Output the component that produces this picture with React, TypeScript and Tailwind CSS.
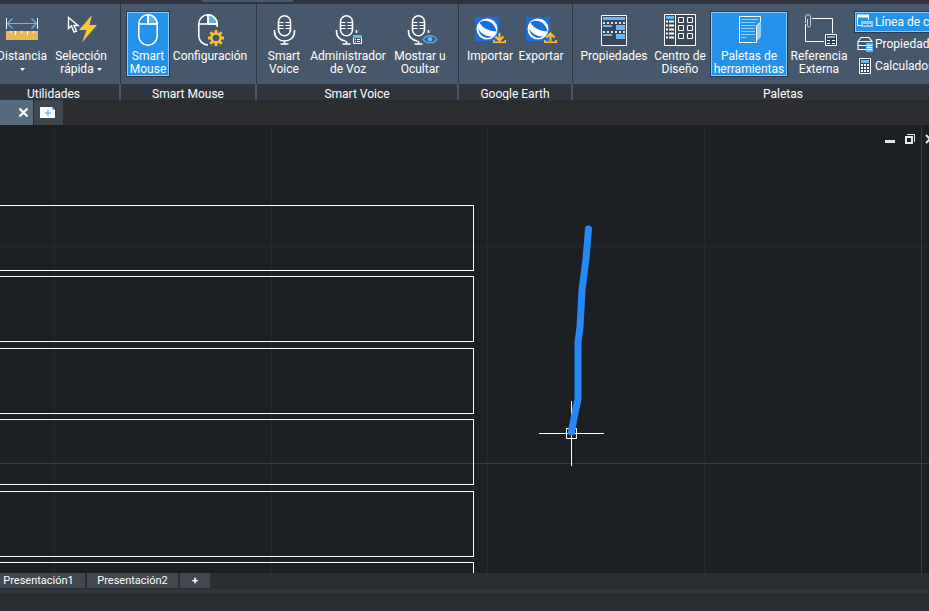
import React from 'react';

const Mouse = ({ x = 6, cut = false }: { x?: number; cut?: boolean }) => (
  <g fill="none" stroke="#fff" strokeWidth="1.6">
    <path d={`M${x + 10} .8a9.2 9.2 0 0 1 9.2 9.2h-9.2z`} fill="#5bb2f5" />
    {cut ? (
      <path d={`M${x + 10} 31A9.2 9.2 0 0 1 ${x + 0.8} 22V10A9.2 9.2 0 0 1 ${x + 19.2} 10V13`} />
    ) : (
      <rect x={x + 0.8} y=".8" width="18.4" height="30.4" rx="9.2" />
    )}
    <path d={`M${x + 1} 10h18M${x + 10} 1v9`} />
  </g>
);

const Mic = ({ x = 0, cut = false }: { x?: number; cut?: boolean }) => (
  <g fill="none" stroke="#fff" strokeWidth="1.6" transform={`translate(${x} 0)`}>
    <rect x="10.5" y="1.8" width="12" height="20" rx="6" />
    <path d="M10.5 8.5h5M10.5 11.5h5M10.5 14.5h5M17.5 8.5h5M17.5 11.5h5M17.5 14.5h5" strokeWidth="1" />
    <path d={cut ? 'M6.5 16v2c0 5 4 8.500 9 9M26.5 16v3' : 'M6.5 16v1.5c0 6 4.5 9.500 10 9.500s10-3.5 10-9.500V16'} />
    <path d="M16.5 27v2.5M12.5 30h8" />
  </g>
);

const Earth = ({ up = false }: { up?: boolean }) => (
  <g>
    <path d="M1 3h24v24H1z" fill="#1a6fdc" />
    <circle cx="13" cy="15" r="10.5" fill="#fff" />
    <path d="M5.500 8.500C11 4 21 8 22.500 17.500 17 17.500 8 14.500 5.500 8.500z" fill="#1a6fdc" />
    <path d="M4 14.500c2.500 5 8 8 14 8-4.500 2.800-12 1.500-14-8z" fill="#1a6fdc" />
    <g fill="none" stroke="#fcc02f" strokeWidth="1.6">
      <path d="M19.800 26v2.200h11.400V26" />
      <path d={up ? 'M25.5 27v-7M21.5 23.5l4-4 4 4' : 'M25.5 19v7M21.5 22.5l4 4 4-4'} strokeWidth="2" />
    </g>
  </g>
);

const icons: Record<string, React.ReactNode> = {
  distance: (
    <g fill="none">
      <path d="M2 9.500h28M6.500 4.500l-5 5 5 5M25.500 4.500l5 5-5 5" stroke="#62b8fb" strokeWidth="1.2" />
      <path d="M.5 4v11M31.5 4v11" stroke="#fff" />
      <path d="M0 17h32v9H0z" fill="#e9b858" />
      <path d="M4.5 17v2M9.5 17v4M15.5 17v2M21.5 17v4M27.5 17v2" stroke="#fff" />
    </g>
  ),
  select: (
    <g>
      <path d="M3.5 3.5v11l3-2.5 2.5 6 2.5-1-2.5-5.5h4z" fill="none" stroke="#fff" strokeWidth="1.4" />
      <path d="M27 1L14 16h7.500L17 28.500 32 11h-7.500L27 1z" fill="#fcc737" />
    </g>
  ),
  mouse: <Mouse />,
  config: (
    <g>
      <Mouse x={4} cut />
      <g fill="none" stroke="#fcc02f">
        <circle cx="22" cy="24" r="4.5" strokeWidth="2.4" />
        <path d="M22 16v3M22 29v3M14 24h3M27 24h3M16.300 18.300l2 2M25.700 27.700l2 2M27.700 18.300l-2 2M18.300 27.700l-2 2" strokeWidth="2.8" />
      </g>
    </g>
  ),
  mic: <Mic />,
  micAdmin: (
    <g>
      <Mic x={-2} cut />
      <path d="M21 21h10v10H21z" fill="#47586c" />
      <path d="M21.5 22.5h8v7h-8z" fill="none" stroke="#fff" />
      <path d="M21 21h9v3h-9z" fill="#62b8fb" />
      <path d="M23 25.5h1M25 25.5h3M23 27.5h1M25 27.5h3" stroke="#fff" />
    </g>
  ),
  micEye: (
    <g>
      <Mic x={-2} cut />
      <path d="M19 25.5c3.500-5 10.500-5 14 0-3.500 4.500-10.500 4.500-14 0z" fill="#47586c" stroke="#4fa9ee" strokeWidth="1.3" />
      <circle cx="26" cy="25.200" r="2.300" fill="#62b8fb" />
    </g>
  ),
  earthIn: <Earth />,
  earthOut: <Earth up />,
  props: (
    <g>
      <path d="M3.500 1.500h25v30h-25z" fill="#3b4755" stroke="#fff" />
      <path d="M5 3h22v3H5zM5 11h9v2H5zM18 11h9v5h-9zM5 20h9v2H5zM18 20h9v5h-9z" fill="#62b8fb" />
      <path d="M5 9h22M5 18h22" stroke="#dfe5ec" strokeWidth="2" strokeDasharray="2 2" />
    </g>
  ),
  center: (
    <g fill="none" stroke="#fff">
      <path d="M.5.5h31v31H.5zM11.500 1v30" fill="#3b4755" />
      <path d="M2 3.500h8" stroke="#62b8fb" strokeWidth="3" />
      <path d="M2 7.500h2M5 7.500h5M2 11.500h2M5 11.500h5M2 15.500h2M5 15.500h5M2 19.500h2M5 19.500h5M2 23.500h2M5 23.500h5" strokeWidth="2" />
      <path d="M14.500 3.500h5v5h-5zM23.500 3.500h5v5h-5zM14.500 11.500h5v5h-5zM23.500 11.500h5v5h-5zM14.500 19.500h5v5h-5zM23.500 19.500h5v5h-5z" />
    </g>
  ),
  palette: (
    <g fill="none">
      <path d="M23 12l5-4v15l-5 5z" fill="#8fd0ff" />
      <path d="M6.500 2.500h21v5.500l-4 4v16.500h-17z" stroke="#fff" />
      <path d="M8 5.500h17M8 8.500h14M8 11.500h14M8 14.500h14M8 17.500h14M8 20.500h14M8 23.500h5" stroke="#8fd0ff" />
    </g>
  ),
  xref: (
    <g fill="none" stroke="#fff">
      <path d="M2.500 10v17.500H21M9 4.500h20.500V19" />
      <path d="M2.500 9V3a2.500 2.500 0 0 1 5 0v8.500a1.500 1.500 0 0 1-3 0V5" stroke="#c8d3de" />
      <path d="M22.500 20.500h11v11h-11z" fill="#2f3f52" />
      <path d="M24 23h8" stroke="#62b8fb" strokeWidth="2" />
      <path d="M24 26.500h3M29 26.500h3M24 29.500h3M29 29.500h3" />
    </g>
  ),
};

const Icon = ({ name }: { name: string }) => (
  <svg width="32" height="32" viewBox="0 0 32 32" className="block shrink-0 overflow-visible" aria-hidden="true">
    {icons[name]}
  </svg>
);

interface ToolProps {
  icon: string;
  lines: string[];
  width: string;
  active?: boolean;
  menu?: boolean;
}

const Caret = () => (
  <svg width="5" height="3" viewBox="0 0 5 3" className="inline-block align-middle" aria-hidden="true">
    <path d="M0 0h5L2.500 3z" fill="#fff" />
  </svg>
);

const Tool: React.FC<ToolProps> = ({ icon, lines, width, active, menu }) => (
  <button
    className={`flex h-[66px] shrink-0 flex-col items-center border pt-0.5 ${width} ${
      active ? 'border-[#2b3848] bg-[#2491eb] inset-ring inset-ring-[#8accfb]' : 'border-transparent'
    }`}
  >
    <Icon name={icon} />
    <span className="mt-1 flex flex-col items-center">
      {lines.map((line, i) => (
        <span key={line} className="whitespace-nowrap">
          {line}
          {menu && lines.length > 1 && i === lines.length - 1 && <> <Caret /></>}
        </span>
      ))}
      {menu && lines.length === 1 && <span><Caret /></span>}
    </span>
  </button>
);

interface PanelProps {
  title: string;
  width: string;
  bodyClass?: string;
  titleClass?: string;
  children: React.ReactNode;
}

const Panel: React.FC<PanelProps> = ({ title, width, bodyClass = 'pl-[5px]', titleClass = '', children }) => (
  <section className={`flex shrink-0 flex-col ${width}`}>
    <div className={`flex h-20 border-r border-[#2f3640] bg-[#47586c] pt-[7px] ${bodyClass}`}>{children}</div>
    <h2 className={`h-4 overflow-hidden border-r-2 border-[#47586c] bg-[#2f353f] text-center leading-5 ${titleClass}`}>{title}</h2>
  </section>
);

const smallTools = [
  {
    label: 'Línea de comandos',
    active: true,
    icon: (
      <g fill="none" stroke="#fff">
        <path d="M.5 1.500v10h4M11.500 2v4" />
        <path d="M0 2h12" strokeWidth="3" />
        <path d="M4 7h12v6H4z" fill="#8fd0ff" stroke="none" />
        <path d="M6 10.500h4M11 10.500h3" stroke="#2577bd" />
      </g>
    ),
  },
  {
    label: 'Propiedades de capas',
    icon: (
      <g fill="none" stroke="#fff" strokeWidth="1.200">
        <path d="M1 5.500l3-4h8l3 4zM1 5.500v4h8M1 9.500v4h8" />
        <path d="M9 7h7v9H9z" fill="#62b8fb" stroke="none" />
        <path d="M10 9.500h5M10 11.500h5M10 13.500h5" strokeWidth="1" />
      </g>
    ),
  },
  {
    label: 'Calculadora',
    icon: (
      <g fill="none" stroke="#fff">
        <path d="M2.500.5h11v15h-11z" fill="#3b4755" />
        <path d="M4 3.500h8" stroke="#62b8fb" strokeWidth="3" />
        <path d="M4 7h8M4 10h8M4 13h8" strokeWidth="2" strokeDasharray="2 1" />
      </g>
    ),
  },
];

const Ribbon = () => (
  <header className="shrink-0 bg-[#2f353f]">
    <div className="h-1 pl-[202px]">
      <div className="h-0.5 w-[91px] bg-[#47586c]" />
    </div>
    <div className="flex">
      <Panel title="Utilidades" width="w-[121px]" bodyClass="gap-2" titleClass="pr-3">
        <Tool icon="distance" lines={['Distancia']} width="w-11" menu />
        <Tool icon="select" lines={['Selección', 'rápida']} width="w-[58px]" menu />
      </Panel>
      <Panel title="Smart Mouse" width="w-[136px]">
        <Tool icon="mouse" lines={['Smart', 'Mouse']} width="w-11" active />
        <Tool icon="config" lines={['Configuración']} width="w-20" />
      </Panel>
      <Panel title="Smart Voice" width="w-[202px]">
        <Tool icon="mic" lines={['Smart', 'Voice']} width="w-11" />
        <Tool icon="micAdmin" lines={['Administrador', 'de Voz']} width="w-[84px]" />
        <Tool icon="micEye" lines={['Mostrar u', 'Ocultar']} width="w-[60px]" />
      </Panel>
      <Panel title="Google Earth" width="w-[114px]">
        <Tool icon="earthIn" lines={['Importar']} width="w-[52px]" />
        <Tool icon="earthOut" lines={['Exportar']} width="w-[50px]" />
      </Panel>
      <Panel title="Paletas" width="w-[422px]">
        <Tool icon="props" lines={['Propiedades']} width="w-[72px]" />
        <Tool icon="center" lines={['Centro de', 'Diseño']} width="w-[60px]" />
        <Tool icon="palette" lines={['Paletas de', 'herramientas']} width="w-[78px]" active />
        <Tool icon="xref" lines={['Referencia', 'Externa']} width="w-[62px]" />
        <div className="ml-1 w-[136px]">
          {smallTools.map((tool) => (
            <button
              key={tool.label}
              className={`flex h-[22px] w-full items-center gap-0.5 border pl-0.5 whitespace-nowrap ${
                tool.active ? 'border-[#2b3848] bg-[#2491eb] inset-ring inset-ring-[#8accfb]' : 'border-transparent'
              }`}
            >
              <svg width="16" height="16" viewBox="0 0 16 16" className="shrink-0" aria-hidden="true">
                {tool.icon}
              </svg>
              {tool.label}
            </button>
          ))}
        </div>
      </Panel>
    </div>
  </header>
);

const FileTabs = () => (
  <nav className="flex h-[25px] shrink-0 gap-px bg-[#2b2d31]">
    <button aria-label="Cerrar" className="flex w-[33px] items-center justify-end bg-[#566a80] pr-1">
      <svg width="11" height="11" viewBox="0 0 11 11" aria-hidden="true">
        <path d="M1.500 1.500l8 8M9.500 1.500l-8 8" stroke="#fff" strokeWidth="2.200" />
      </svg>
    </button>
    <button aria-label="Nuevo dibujo" className="flex w-[29px] items-center justify-center bg-[#40464f] pr-0.5">
      <svg width="15" height="11" viewBox="0 0 15 11" aria-hidden="true">
        <path d="M0 0h12l3 3v8H0z" fill="#fff" />
        <path d="M12 0v3h3" fill="#62b8fb" />
        <path d="M5 6h6M8 3v6" stroke="#3d9cf0" />
      </svg>
    </button>
  </nav>
);

const rows = [80, 151, 223, 294, 366, 437];

const Canvas = () => (
  <main className="relative min-h-[300px] flex-1 overflow-hidden bg-[#1c1f24]">
    <svg className="absolute inset-0 h-full w-full" fill="none" aria-hidden="true">
      <path d="M54.500 0v2000M271.500 0v2000M487.500 0v2000M704.500 0v2000M0 121.500h4000" stroke="#25282d" />
      <path d="M0 338.500h4000M921.500 0v2000" stroke="#383b40" />
      {rows.map((y) => (
        <rect key={y} x="-9.500" y={y + 0.5} width="483" height="65" stroke="#fff" />
      ))}
      <path d="M539 308.500h65M571.500 276v65M566.500 303.500h10v10h-10z" stroke="#fff" />
      <path
        d="M588.500 104L586 134l-4 31-2 37-2 15v57l-4 19-2.500 14"
        stroke="#2488f5"
        strokeWidth="7"
        strokeLinecap="round"
        strokeLinejoin="round"
      />
    </svg>
    <div className="absolute top-2 left-[884px] flex gap-2">
      <button aria-label="Minimizar">
        <svg width="12" height="12" viewBox="0 0 12 12"><path d="M1 7h10v3H1z" fill="#e6e6e6" /></svg>
      </button>
      <button aria-label="Restaurar">
        <svg width="12" height="12" viewBox="0 0 12 12" fill="none" stroke="#e6e6e6">
          <path d="M3 1.500h7.500V9" />
          <path d="M2 4h6v6H2z" strokeWidth="2" />
        </svg>
      </button>
      <button aria-label="Cerrar ventana">
        <svg width="12" height="12" viewBox="0 0 12 12"><path d="M2 2l8 8M10 2l-8 8" stroke="#e6e6e6" strokeWidth="2" /></svg>
      </button>
    </div>
  </main>
);

const LayoutTabs = () => (
  <footer className="shrink-0 bg-[#2b2d31] text-[11px] leading-[15px]">
    <div className="flex h-4 items-start gap-0.5">
      <button className="w-[85px] bg-[#434850] pr-2">Presentación1</button>
      <button className="w-[91px] bg-[#434850]">Presentación2</button>
      <button aria-label="Nueva presentación" className="w-[30px] bg-[#434850] font-bold">+</button>
    </div>
    <div className="h-1 bg-[#2f3742]" />
    <div className="h-[18px]" />
  </footer>
);

export default function App() {
  return (
    <div className="flex min-h-screen flex-col overflow-hidden bg-[#2b2d31] font-['Roboto',sans-serif] text-[12px] leading-[13px] text-white">
      <Ribbon />
      <FileTabs />
      <Canvas />
      <LayoutTabs />
    </div>
  );
}
